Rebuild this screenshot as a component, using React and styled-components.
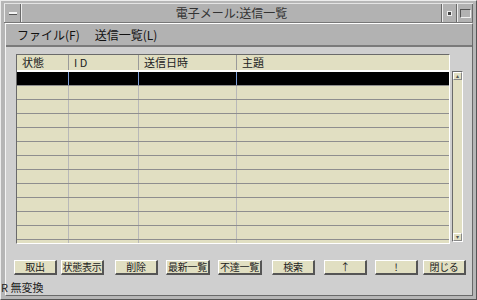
import styled, { createGlobalStyle } from "styled-components";

const Global = createGlobalStyle`
  html, body { margin: 0; padding: 0; background: #b8b8b8; }
  body { font-family: "Noto Sans CJK JP", "DejaVu Sans", sans-serif; }
`;

const Frame = styled.div`
  width: 477px;
  height: 300px;
  box-sizing: border-box;
  background: #b6b6b6;
  border-top: 1px solid #ececec;
  border-left: 1px solid #ececec;
  border-right: 1px solid #555;
  border-bottom: 1px solid #555;
  padding: 2px 3px 3px 3px;
  display: flex;
  flex-direction: column;
`;

const TitleBar = styled.div`
  display: flex;
  height: 18px;
  border-top: 1px solid #e4e4e4;
  border-bottom: 1px solid #777;
  background: #b2b2b2;
`;

const WinButton = styled.div`
  width: ${(p) => p.$w || 15}px;
  display: flex;
  align-items: center;
  justify-content: center;
  border-left: 1px solid #ececec;
  border-right: 1px solid #6a6a6a;
  box-sizing: border-box;
`;

const Dash = styled.div`
  width: 8px;
  height: 2px;
  background: #f4f4f4;
  border-bottom: 1px solid #555;
`;

const Dot = styled.div`
  width: 3px;
  height: 3px;
  background: #444;
  border: 1px solid #eee;
`;

const Square = styled.div`
  width: 9px;
  height: 7px;
  border-top: 1px solid #555;
  border-left: 1px solid #555;
  border-right: 1px solid #f0f0f0;
  border-bottom: 1px solid #f0f0f0;
`;

const Title = styled.div`
  flex: 1;
  text-align: center;
  font-size: 12px;
  line-height: 18px;
  color: #333;
  border-left: 1px solid #ececec;
  border-right: 1px solid #6a6a6a;
`;

const Body = styled.div`
  flex: 1;
  display: flex;
  flex-direction: column;
  background: #cfcfcf;
  border-top: 1px solid #ffffff;
  border-left: 1px solid #f4f4f4;
  border-right: 1px solid #6a6a6a;
  border-bottom: 1px solid #6a6a6a;
  margin-left: 1px;
`;

const MenuBar = styled.div`
  display: flex;
  gap: 15px;
  height: 21px;
  padding: 0 11px;
  align-items: center;
  background: #b2b2b2;
  border-bottom: 2px solid #7a7a7a;
  font-size: 12px;
  color: #111;
`;

const Content = styled.div`
  flex: 1;
  display: flex;
  padding: 7px 7px 0 10px;
  gap: 2px;
`;

const Table = styled.div`
  width: 434px;
  height: 190px;
  box-sizing: border-box;
  border-top: 1px solid #6a6a6a;
  border-left: 1px solid #6a6a6a;
  border-right: 1px solid #fff;
  border-bottom: 1px solid #fff;
  background: #e1dfc2;
  overflow: hidden;
`;

const Row = styled.div`
  display: grid;
  grid-template-columns: 52px 70px 98px 1fr;
  height: ${(p) => (p.$head ? 15 : 13)}px;
  background: ${(p) => (p.$sel ? "#000" : "#e1dfc2")};
  border-bottom: ${(p) => (p.$head ? "2px solid #fff" : "1px solid #8e8e8e")};
`;

const Cell = styled.div`
  font-size: 11px;
  line-height: 15px;
  padding-left: 5px;
  color: #222;
  border-right: 1px solid ${(p) => (p.$sel ? "#7f9fd8" : p.$head ? "#9a9a9a" : "#b8b8b8")};
  &:last-child { border-right: none; }
  white-space: nowrap;
`;

const Scroll = styled.div`
  width: 11px;
  margin-top: 17px;
  height: 171px;
  box-sizing: border-box;
  background: #e1dfc2;
  border-top: 1px solid #6a6a6a;
  border-left: 1px solid #6a6a6a;
  border-right: 1px solid #fff;
  border-bottom: 1px solid #fff;
  display: flex;
  flex-direction: column;
  justify-content: space-between;
  align-items: center;
`;

const Arrow = styled.div`
  width: 7px;
  height: 6px;
  font-size: 6px;
  line-height: 6px;
  text-align: center;
  color: #555;
  border: 1px solid #888;
  border-top-color: #fff;
  border-left-color: #fff;
`;

const ButtonRow = styled.div`
  display: flex;
  padding: 11px 0 0 8px;
`;

const Btn = styled.div`
  width: ${(p) => p.$w}px;
  margin-left: ${(p) => p.$ml}px;
  height: 15px;
  box-sizing: border-box;
  background: #e1dfc2;
  border-top: 1px solid #fff;
  border-left: 1px solid #fff;
  border-right: 2px solid #555;
  border-bottom: 2px solid #555;
  font-size: 10px;
  line-height: 12px;
  letter-spacing: -0.3px;
  text-align: center;
  color: #222;
  white-space: nowrap;
  overflow: hidden;
`;

const Status = styled.div`
  font-size: 11px;
  padding: 4px 0 0 0;
  margin-left: -5px;
  color: #222;
`;

const cols = ["状態", "I D", "送信日時", "主題"];

const buttons = [
  ["取出", 43, 0],
  ["状態表示", 43, 4],
  ["削除", 43, 11],
  ["最新一覧", 44, 8],
  ["不達一覧", 44, 8],
  ["検索", 43, 10],
  ["↑", 43, 9],
  ["!", 43, 8],
  ["閉じる", 43, 5],
];

export default function App() {
  const rows = Array.from({ length: 13 }, (_, i) => i);
  return (
    <Frame>
      <Global />
      <TitleBar>
        <WinButton $w={17}>
          <Dash />
        </WinButton>
        <Title>電子メール:送信一覧</Title>
        <WinButton>
          <Dot />
        </WinButton>
        <WinButton $w={16}>
          <Square />
        </WinButton>
      </TitleBar>
      <Body>
        <MenuBar>
          <span>ファイル(F)</span>
          <span>送信一覧(L)</span>
        </MenuBar>
        <Content>
          <Table>
            <Row $head>
              {cols.map((c) => (
                <Cell key={c} $head>
                  {c}
                </Cell>
              ))}
            </Row>
            {rows.map((i) => (
              <Row key={i} $sel={i === 0}>
                {cols.map((c) => (
                  <Cell key={c} $sel={i === 0} />
                ))}
              </Row>
            ))}
          </Table>
          <Scroll>
            <Arrow>▴</Arrow>
            <Arrow>▾</Arrow>
          </Scroll>
        </Content>
        <ButtonRow>
          {buttons.map(([t, w, ml]) => (
            <Btn key={t} $w={w} $ml={ml}>
              {t}
            </Btn>
          ))}
        </ButtonRow>
        <Status>R 無変換</Status>
      </Body>
    </Frame>
  );
}
